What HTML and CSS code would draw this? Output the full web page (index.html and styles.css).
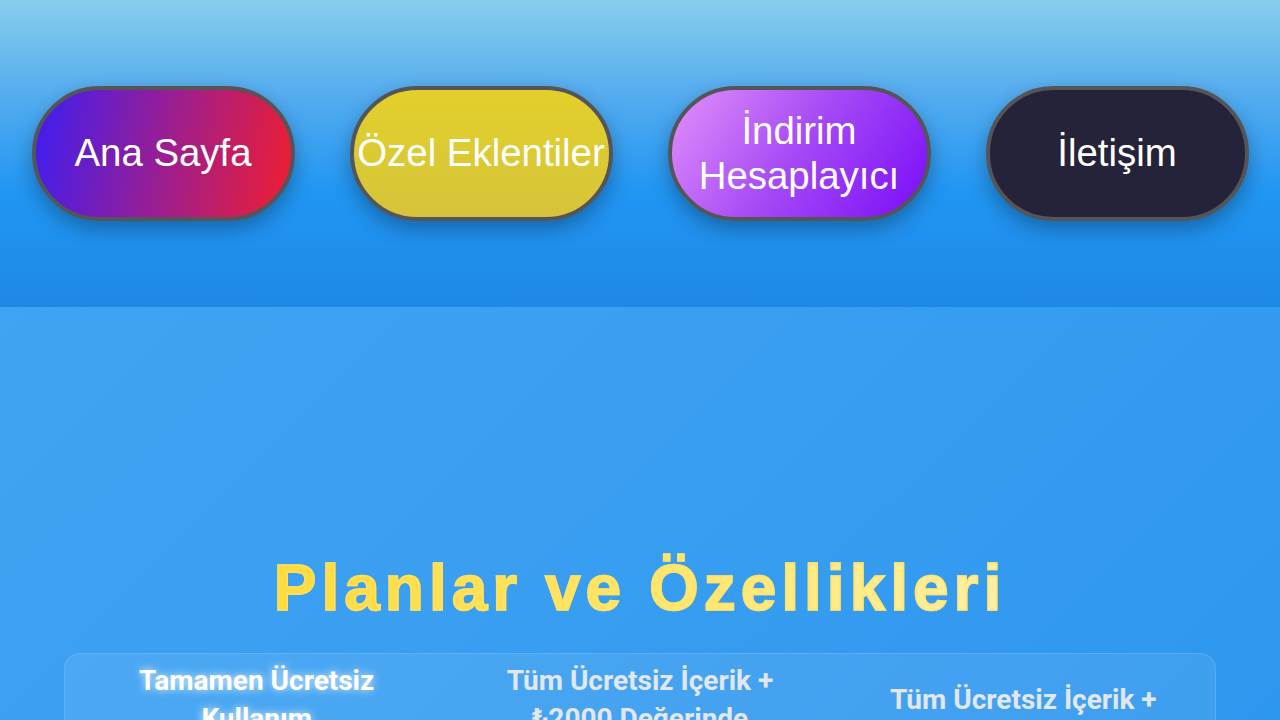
FILE: index.html
```html
<!DOCTYPE html>
<html lang="tr">
<head>
<meta charset="utf-8">
<title>Planlar ve Özellikleri</title>
<link rel="stylesheet" href="styles.css">
</head>
<body>
<header class="site-header">
  <nav class="nav">
    <a class="nav-btn btn-home" href="#">Ana Sayfa</a>
    <a class="nav-btn btn-plugins" href="#">Özel Eklentiler</a>
    <a class="nav-btn btn-calc" href="#">İndirim Hesaplayıcı</a>
    <a class="nav-btn btn-contact" href="#">İletişim</a>
  </nav>
</header>
<main class="content">
  <h2 class="plans-title">Planlar ve Özellikleri</h2>
  <div class="plans-card">
    <table class="plans-table">
      <thead>
        <tr>
          <th class="plan-free">Tamamen Ücretsiz Kullanım <span class="price">₺0</span></th>
          <th class="plan-other">Tüm Ücretsiz İçerik + ₺2000 Değerinde <span class="price">Eklentiler</span></th>
          <th class="plan-other">Tüm Ücretsiz İçerik + Tüm Eklentiler</th>
        </tr>
      </thead>
    </table>
  </div>
</main>
</body>
</html>
```
FILE: styles.css
```css
html, body {
  margin: 0;
  padding: 0;
}
body {
  min-height: 100vh;
  font-family: "Liberation Sans", Arial, sans-serif;
  background: linear-gradient(135deg, #42a5f5 0%, #3a9ff1 50%, #2d96ee 100%);
  overflow: hidden;
}
.site-header {
  background: linear-gradient(180deg, #87ceeb 0%, #56adef 30%, #2196f3 62%, #1e88e5 100%);
  padding: 86px 0;
}
.nav {
  display: flex;
  justify-content: center;
  gap: 55px;
}
.nav-btn {
  box-sizing: border-box;
  width: 263px;
  height: 135px;
  border: 4px solid #555559;
  border-radius: 100px;
  display: flex;
  align-items: center;
  justify-content: center;
  text-align: center;
  color: #fff;
  text-decoration: none;
  font-size: 38.4px;
  line-height: 1.15;
  box-shadow: 0 8px 20px rgba(0, 0, 0, 0.3);
}
.btn-home {
  background: linear-gradient(100deg, #3e1ef2 0%, #9a1e92 50%, #f01e30 100%);
}
.btn-plugins {
  background: linear-gradient(180deg, #e3d02b 0%, #d5c43b 100%);
}
.btn-calc {
  background: linear-gradient(125deg, #e290fa 0%, #a448f6 50%, #7a0cf8 100%);
}
.btn-contact {
  background: #25233a;
}
.content {
  padding-top: 246px;
}
.plans-title {
  margin: 0 0 29px;
  text-align: center;
  font-size: 64px;
  font-weight: 700;
  letter-spacing: 5px;
  line-height: 1.117;
  background: linear-gradient(90deg, #ffd21c 0%, #ffe56a 50%, #fff7cf 100%);
  -webkit-background-clip: text;
  background-clip: text;
  color: transparent;
  -webkit-text-fill-color: transparent;
  -webkit-text-stroke: 1.5px rgba(255, 226, 100, 0.75);
}
.plans-card {
  width: 90%;
  margin: 0 auto;
  box-sizing: border-box;
  border-radius: 16px;
  background: rgba(255, 255, 255, 0.08);
  border: 1px solid rgba(255, 255, 255, 0.12);
}
.plans-table {
  width: 100%;
  border-collapse: collapse;
  table-layout: fixed;
}
.plans-table th {
  padding: 8px 28px;
  font-family: Roboto, "Liberation Sans", sans-serif;
  font-weight: 700;
  font-size: 28px;
  line-height: 38px;
  vertical-align: middle;
  text-align: center;
}
.plan-free {
  color: #ffffff;
  text-shadow: 0 0 8px rgba(255, 255, 255, 0.85);
}
.price {
  display: block;
}
.plan-other {
  color: #e2e7ee;
}
```
